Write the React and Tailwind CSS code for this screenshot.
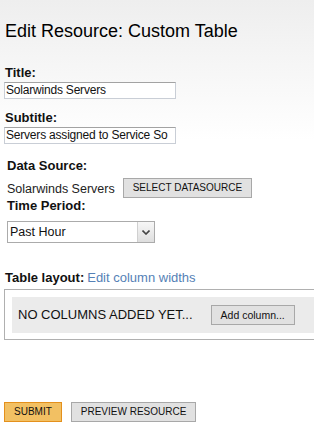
import React from "react";

const Label = ({ children, className = "" }) => (
  <div className={`text-[13px] font-bold leading-[16px] text-[#111] ${className}`}>{children}</div>
);

const TextBox = ({ value }) => (
  <div className="mt-[1px] h-[17px] w-[172px] overflow-hidden whitespace-nowrap border border-[#c9ced6] border-t-[#a3a3a3] bg-white px-[1px] text-[12px] leading-[15px] tracking-[-0.2px] text-[#111]">
    {value}
  </div>
);

const GrayButton = ({ children, className = "" }) => (
  <button
    className={`h-[20px] border border-[#a8a8a8] bg-[#e1e1e1] px-[9px] text-[10px] leading-[18px] text-[#111] ${className}`}
  >
    {children}
  </button>
);

const App = () => {
  return (
    <div
      className="h-screen w-full overflow-hidden bg-[linear-gradient(to_bottom,#eeeeee_0px,#ffffff_140px)] pl-[4px] pt-[21px] text-[#111]"
      style={{ fontFamily: '"Liberation Sans", Arial, sans-serif' }}
    >
      {/* Heading */}
      <h1 className="ml-[1px] text-[18px] leading-[20px] text-black">Edit Resource: Custom Table</h1>

      {/* Title / Subtitle */}
      <Label className="ml-[1px] mt-[24px]">Title:</Label>
      <TextBox value="Solarwinds Servers" />

      <Label className="ml-[1px] mt-[11px]">Subtitle:</Label>
      <TextBox value="Servers assigned to Service So" />

      {/* Data source + time period */}
      <div className="ml-[3px] mt-[14px]">
        <Label>Data Source:</Label>
        <div className="mt-[4px] flex items-center gap-[8px]">
          <span className="pt-[2px] text-[12.5px] leading-[16px] text-[#222]">Solarwinds Servers</span>
          <GrayButton>SELECT DATASOURCE</GrayButton>
        </div>

        <Label>Time Period:</Label>
        <div className="mt-[7px] flex h-[22px] w-[148px] border border-[#ababab] bg-white">
          <div className="flex-1 pl-[2px] text-[12.5px] leading-[20px] text-[#111]">Past Hour</div>
          <div className="flex w-[17px] items-center justify-center border-l border-[#d0d0d0] bg-linear-to-b from-[#f7f7f7] to-[#dedede]">
            <svg width="8" height="5" viewBox="0 0 8 5">
              <path d="M0.5 0.5 L4 4 L7.5 0.5" fill="none" stroke="#444" strokeWidth="1.6" />
            </svg>
          </div>
        </div>
      </div>

      {/* Table layout */}
      <div className="ml-[1px] mt-[27px] flex items-baseline gap-[3px] leading-[16px]">
        <span className="text-[13px] font-bold text-[#111]">Table layout:</span>
        <span className="text-[13px] text-[#5581b6]">Edit column widths</span>
      </div>

      <div className="mt-[3px] w-[340px] border border-[#b0b0b0] pb-[6px] pl-[7px] pt-[7px]">
        <div className="flex h-[36px] items-center bg-[#ebebeb] pl-[6px]">
          <span className="text-[13px] leading-[16px] text-[#111]">NO COLUMNS ADDED YET...</span>
          <button className="ml-[18px] h-[20px] border border-[#a8a8a8] bg-[#e1e1e1] px-[9px] text-[10.5px] leading-[18px] text-[#111]">
            Add column...
          </button>
        </div>
      </div>

      {/* Footer buttons */}
      <div className="mt-[62px] flex gap-[9px]">
        <button className="h-[20px] border border-[#e4901c] bg-[#f2c063] px-[9px] text-[10px] leading-[18px] text-[#111]">
          SUBMIT
        </button>
        <GrayButton>PREVIEW RESOURCE</GrayButton>
      </div>
    </div>
  );
};

export default App;
